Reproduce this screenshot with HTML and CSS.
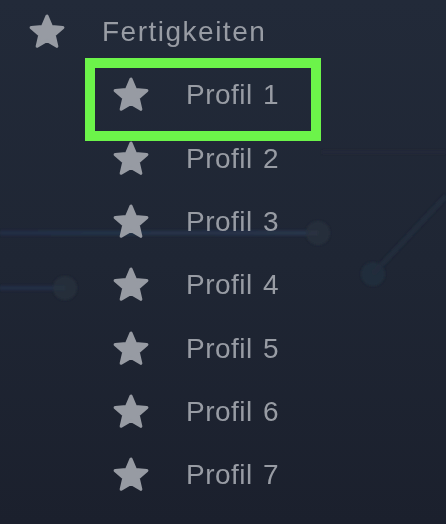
FILE: index.html
```html
<!DOCTYPE html>
<html lang="de">
<head>
<meta charset="utf-8">
<title>Fertigkeiten</title>
<link rel="stylesheet" href="styles.css">
</head>
<body>
<svg class="circuit" width="446" height="524" viewBox="0 0 446 524" aria-hidden="true">
  <defs>
    <linearGradient id="fadeL" gradientUnits="userSpaceOnUse" x1="0" y1="0" x2="320" y2="0">
      <stop offset="0" stop-color="#222e45"/>
      <stop offset="1" stop-color="#28354b"/>
    </linearGradient>
    <filter id="soft" x="-50%" y="-50%" width="200%" height="200%">
      <feGaussianBlur stdDeviation="1.2"/>
    </filter>
  </defs>
  <g filter="url(#soft)">
    <line x1="0" y1="233" x2="318" y2="233" stroke="url(#fadeL)" stroke-width="5"/>
    <circle cx="318" cy="233" r="12" fill="#29323f" opacity="0.75"/>
    <line x1="0" y1="288" x2="65" y2="288" stroke="#222e45" stroke-width="5"/>
    <circle cx="65" cy="288" r="12" fill="#28313e" opacity="0.75"/>
    <line x1="446" y1="196" x2="373" y2="274" stroke="#25303f" stroke-width="5" opacity="0.7"/>
    <circle cx="373" cy="274" r="12" fill="#232e3d" opacity="0.8"/>
    <line x1="322" y1="152" x2="446" y2="152" stroke="#252f3e" stroke-width="4" opacity="0.35"/>
  </g>
</svg>

<nav class="menu">
  <div class="row heading">
    <svg class="star" viewBox="0 0 24 24"><path d="M12 17.27L18.18 21l-1.64-7.03L22 9.24l-7.19-.61L12 2 9.19 8.63 2 9.24l5.46 4.73L5.82 21z"/></svg>
    <span class="label">Fertigkeiten</span>
  </div>
  <div class="row item selected">
    <svg class="star" viewBox="0 0 24 24"><path d="M12 17.27L18.18 21l-1.64-7.03L22 9.24l-7.19-.61L12 2 9.19 8.63 2 9.24l5.46 4.73L5.82 21z"/></svg>
    <span class="label">Profil 1</span>
  </div>
  <div class="row item">
    <svg class="star" viewBox="0 0 24 24"><path d="M12 17.27L18.18 21l-1.64-7.03L22 9.24l-7.19-.61L12 2 9.19 8.63 2 9.24l5.46 4.73L5.82 21z"/></svg>
    <span class="label">Profil 2</span>
  </div>
  <div class="row item">
    <svg class="star" viewBox="0 0 24 24"><path d="M12 17.27L18.18 21l-1.64-7.03L22 9.24l-7.19-.61L12 2 9.19 8.63 2 9.24l5.46 4.73L5.82 21z"/></svg>
    <span class="label">Profil 3</span>
  </div>
  <div class="row item">
    <svg class="star" viewBox="0 0 24 24"><path d="M12 17.27L18.18 21l-1.64-7.03L22 9.24l-7.19-.61L12 2 9.19 8.63 2 9.24l5.46 4.73L5.82 21z"/></svg>
    <span class="label">Profil 4</span>
  </div>
  <div class="row item">
    <svg class="star" viewBox="0 0 24 24"><path d="M12 17.27L18.18 21l-1.64-7.03L22 9.24l-7.19-.61L12 2 9.19 8.63 2 9.24l5.46 4.73L5.82 21z"/></svg>
    <span class="label">Profil 5</span>
  </div>
  <div class="row item">
    <svg class="star" viewBox="0 0 24 24"><path d="M12 17.27L18.18 21l-1.64-7.03L22 9.24l-7.19-.61L12 2 9.19 8.63 2 9.24l5.46 4.73L5.82 21z"/></svg>
    <span class="label">Profil 6</span>
  </div>
  <div class="row item">
    <svg class="star" viewBox="0 0 24 24"><path d="M12 17.27L18.18 21l-1.64-7.03L22 9.24l-7.19-.61L12 2 9.19 8.63 2 9.24l5.46 4.73L5.82 21z"/></svg>
    <span class="label">Profil 7</span>
  </div>
</nav>
</body>
</html>
```

FILE: styles.css
```css
html, body {
  margin: 0;
  padding: 0;
}

body {
  width: 446px;
  height: 524px;
  overflow: hidden;
  position: relative;
  background: linear-gradient(180deg, #222a39 0%, #1f2634 50%, #1b202d 100%);
  font-family: "Liberation Sans", Arial, Helvetica, sans-serif;
}

.circuit {
  position: absolute;
  left: 0;
  top: 0;
  z-index: 0;
}

.menu {
  position: relative;
  z-index: 1;
  display: flex;
  flex-direction: column;
  padding-top: 0.33px;
}

.row {
  height: 63.33px;
  display: flex;
  align-items: center;
  gap: 36px;
  box-sizing: border-box;
}

.heading {
  padding-left: 28px;
}

.item {
  padding-left: 112px;
  position: relative;
}

.star {
  width: 38px;
  height: 38px;
  flex: none;
}

.star path {
  fill: #979ba3;
  stroke: #979ba3;
  stroke-width: 2;
  stroke-linejoin: round;
}

.label {
  font-size: 28px;
  line-height: 1.15;
  color: #989ca4;
}

.heading .label {
  letter-spacing: 1.5px;
}

.item .label {
  letter-spacing: 0.5px;
  word-spacing: 2px;
}

.selected::after {
  content: "";
  position: absolute;
  left: 85px;
  top: -6px;
  width: 236px;
  height: 83px;
  box-sizing: border-box;
  border: 10px solid #6cf44a;
}
```
